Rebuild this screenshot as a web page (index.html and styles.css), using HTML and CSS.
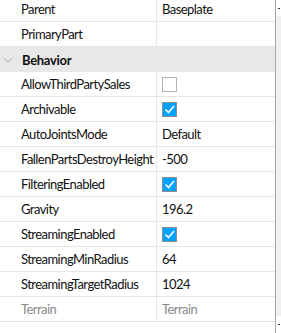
FILE: index.html
```html
<!DOCTYPE html>
<html lang="en">
<head>
  <meta charset="UTF-8" />
  <title>Properties</title>
  <link rel="stylesheet" href="styles.css">
</head>
<body>
  <div class="panel">
    <div class="props">
      <div class="row"><div class="name">Parent</div><div class="value">Baseplate</div></div>
      <div class="row"><div class="name">PrimaryPart</div><div class="value"></div></div>
      <div class="group">
        <svg class="chev" width="10" height="6" viewBox="0 0 10 6"><path d="M0.5 0.5 L5 5 L9.5 0.5" fill="none" stroke="#a8a8a8" stroke-width="1"/></svg>
        <span>Behavior</span>
      </div>
      <div class="row"><div class="name">AllowThirdPartySales</div><div class="value"><span class="box"></span></div></div>
      <div class="row"><div class="name">Archivable</div><div class="value"><span class="box on"><svg width="13" height="13" viewBox="0 0 13 13"><path d="M2.5 6.5 L5.5 9.5 L11 3" fill="none" stroke="#fff" stroke-width="1.6"/></svg></span></div></div>
      <div class="row"><div class="name">AutoJointsMode</div><div class="value">Default</div></div>
      <div class="row"><div class="name">FallenPartsDestroyHeight</div><div class="value">-500</div></div>
      <div class="row"><div class="name">FilteringEnabled</div><div class="value"><span class="box on"><svg width="13" height="13" viewBox="0 0 13 13"><path d="M2.5 6.5 L5.5 9.5 L11 3" fill="none" stroke="#fff" stroke-width="1.6"/></svg></span></div></div>
      <div class="row"><div class="name">Gravity</div><div class="value">196.2</div></div>
      <div class="row"><div class="name">StreamingEnabled</div><div class="value"><span class="box on"><svg width="13" height="13" viewBox="0 0 13 13"><path d="M2.5 6.5 L5.5 9.5 L11 3" fill="none" stroke="#fff" stroke-width="1.6"/></svg></span></div></div>
      <div class="row"><div class="name">StreamingMinRadius</div><div class="value">64</div></div>
      <div class="row"><div class="name">StreamingTargetRadius</div><div class="value">1024</div></div>
      <div class="row muted"><div class="name">Terrain</div><div class="value">Terrain</div></div>
    </div>
    <div class="scroll">
      <span class="arrow"></span>
      <div class="track"></div>
      <span class="arrow"></span>
    </div>
  </div>
</body>
</html>
```

FILE: styles.css
```css
body {
  margin: 0;
  background: #fff;
  font-family: Lato, "Open Sans", sans-serif;
  font-size: 13px;
  letter-spacing: -0.55px;
  color: #111;
  overflow: hidden;
}

.panel {
  display: flex;
  height: 333px;
}

.props {
  width: 276px;
  margin-top: -3px;
}

.row {
  display: grid;
  grid-template-columns: 157px 1fr;
  height: 24px;
  border-bottom: 1px solid #e6e6e6;
}

.name {
  padding-left: 21px;
  border-right: 1px solid #e6e6e6;
  white-space: nowrap;
  overflow: hidden;
  line-height: 24px;
}

.value {
  padding-left: 5px;
  line-height: 24px;
  display: flex;
  align-items: center;
}

.muted {
  color: #8a8a8a;
}

.group {
  height: 25px;
  background: #e8e8e8;
  display: flex;
  align-items: center;
  font-weight: bold;
  letter-spacing: -0.3px;
}

.chev {
  margin: 0 9px 0 3px;
}

.box {
  width: 13px;
  height: 13px;
  border: 1px solid #b4b4b4;
  background: #fff;
  display: flex;
}

.box.on {
  background: #00a2ff;
  border-color: #8c8c8c;
}

.scroll {
  width: 5px;
  border-left: 1px solid #a6a6a6;
  display: flex;
  flex-direction: column;
  align-items: center;
}

.track {
  flex: 0 0 300px;
  width: 100%;
  background: #f0f0f0;
}

.arrow {
  width: 2px;
  height: 1px;
  background: #333;
  margin: 8px 0 7px;
}
```
